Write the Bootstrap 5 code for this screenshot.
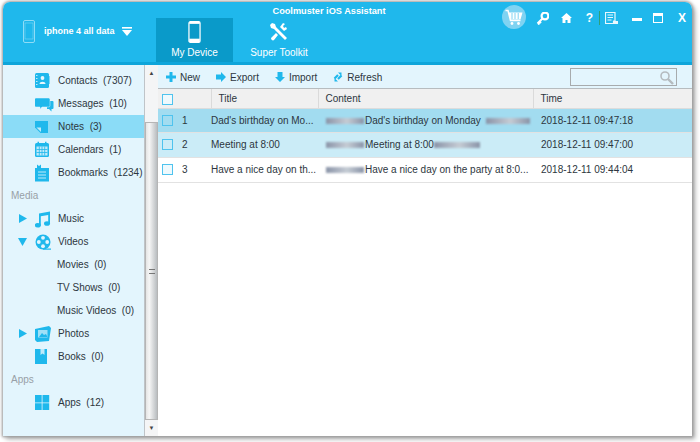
<!doctype html>
<html lang="en"><head><meta charset="utf-8"><title>Coolmuster iOS Assistant</title>
<link href="https://cdn.jsdelivr.net/npm/bootstrap@5.3.0/dist/css/bootstrap.min.css" rel="stylesheet">
<style>
html,body{height:100%;}
body{background:#fff;font-family:"Liberation Sans",Arial,sans-serif;font-size:10px;color:#2d3640;padding:2px 8px 6px 3px;overflow:hidden;}
.appwin{height:434px;border-radius:7px 7px 0 0;box-shadow:0 0 3px 1px #9a9a9a,3px 3px 5px #aaa;background:#fff;overflow:hidden;}
.apphead{height:63px;background:#1fb8ec;border-bottom:3px solid #0ea5da;color:#fff;position:relative;}
.devbox{width:153px;padding-left:20px;padding-bottom:1px;font-weight:700;font-size:9px;gap:9px;}
.devarrow{margin-left:-2px;}
.tabbox{width:77px;height:44px;margin-top:16px;font-size:10px;line-height:12px;text-align:center;padding-top:3px;}
.tabbox svg{display:block;margin:0 auto 4px;height:22px;}
.tabsel{background:#0a9ac9;}
.tabplain{width:92px;}
.apptitle{position:absolute;left:0;width:652px;top:3px;text-align:center;font-weight:700;font-size:9.2px;}
.wintools{position:absolute;top:3px;right:0;height:24px;}
.wt{position:absolute;top:0;}
.sidebox{width:141px;background:#e3f5fd;padding-top:4px;}
.siderow{height:23px;padding-left:32px;}
.nm{margin-left:4px;white-space:pre;}
.siderow.sel{background:#8bdcf7;}
.sidehead{height:23px;padding-left:8px;color:#98a0a6;}
.subrow{padding-left:54px;white-space:pre;}
.tri{position:absolute;left:-16px;top:4px;}
.tridown{left:-17px;top:5px;}
.ico{position:relative;width:19px;height:18px;flex-shrink:0;display:block;}
.sbar{width:14px;background:#f4f5f6;border-left:1px solid #bfc4c8;}
.sbarbtn{height:16px;color:#444;font-size:6px;line-height:16px;text-align:center;}
.sbargap{height:41px;}
.sbarthumb{flex:1;background:linear-gradient(90deg,#e4e4e4,#f6f6f6 30%,#b9bdc0);border:1px solid #b5b5b5;}
.gripper{width:6px;height:5px;border-top:1px solid #777;border-bottom:1px solid #777;position:relative;}
.mainbox{background:#fff;margin-left:0;min-width:0;}
.toolrow{height:24px;background:#e3f5fd;border-bottom:1px solid #b7bcbf;padding-left:8px;padding-top:1px;}
.tbtn{margin-right:16px;gap:4px;}
.searchbox{width:107px;height:18px;border:1px solid #a7abad;margin-left:auto;margin-right:15px;background:#e3f5fd;position:relative;}
.searchbox svg{position:absolute;right:1px;top:1px;}
.grid{table-layout:fixed;width:100%;margin:0;font-size:10px;border-collapse:collapse;}
.grid th,.grid td{padding:0;white-space:nowrap;overflow:hidden;vertical-align:middle;color:#2d3640;box-shadow:none;background:transparent;}
.grid thead th{height:19px;background:#f0f0f0;font-weight:400;border:0;border-bottom:1px solid #dcdcdc;padding-left:7px;border-left:1px solid #dadada;}
.grid thead th:first-child{border-left:0;padding-left:4px;}
.grid tbody td{height:25px;border-bottom:1px solid #e2e2e2;}
.grid tbody tr.rowa td{height:24px;}
.rowa{background:#a2dcf0;}.rowb{background:#cbecf7;}
.chkbox{display:inline-block;width:11px;height:11px;border:1px solid #4fc3ee;background:#eef9fd;vertical-align:middle;}
.rowa .chkbox{background:#a2dcf0;}.rowb .chkbox{background:#cbecf7;}
.numcell{display:inline-block;margin-left:9px;vertical-align:middle;}
.smudge{display:inline-block;height:6px;vertical-align:middle;background:linear-gradient(90deg,#8a94a8,#b5bcc8 40%,#c5ccd4 55%,#8a94a8);filter:blur(1px);}
.s1{width:38px;margin-right:1px;}.s2{width:44px;margin-left:5px;}.s3{width:46px;}
.pt1{padding-left:8px !important;}
</style></head>
<body>
<div class="appwin d-flex flex-column">
  <div class="apphead d-flex flex-shrink-0">
    <div class="devbox d-flex align-items-center">
      <svg width="12" height="23" viewBox="0 0 12 23"><rect x=".5" y=".5" width="11" height="22" rx="1.500" fill="none" stroke="#8fdcf6"/><rect x="2" y="3" width="8" height="16" fill="#1fb8ec" stroke="#7fd6f4" stroke-width=".6"/></svg>
      <span>iphone 4 all data</span>
      <svg class="devarrow" width="10" height="9" viewBox="0 0 10 9"><rect width="10" height="1.600" fill="#fff"/><path d="M0 3h10L5 9z" fill="#fff"/></svg>
    </div>
    <div class="tabbox tabsel">
      <svg width="13" height="22" viewBox="0 0 13 23"><rect x=".7" y=".7" width="11.600" height="21.600" rx="1.500" fill="none" stroke="#fff" stroke-width="1.300"/><rect x="1" y="18.500" width="11" height="3.500" fill="#fff"/><rect x="1" y="1" width="11" height="2" fill="#fff"/></svg>
      My Device
    </div>
    <div class="tabbox tabplain">
      <svg width="20" height="22" viewBox="0 0 20 20"><path d="M3 1l3 1 1 3 11 11-2 2L5 7 2 6 1 3zM13 7l-2-2 3-4 2 1-2 2 1 2 2-1 1 2-3 2zM7 11l2 2-4 5c-1 1-3 0-3-2z" fill="#fff"/></svg>
      Super Toolkit
    </div>
    <div class="apptitle">Coolmuster iOS Assistant</div>
    <div class="wintools">
      <svg class="wt" style="right:166px" width="24" height="24" viewBox="0 0 24 24"><circle cx="12" cy="12" r="12" fill="#7fd3f2"/><path d="M3.500 5.500h2.500l2.500 10h10" fill="none" stroke="#fff" stroke-width="1.500"/><path d="M6.500 7.500h14l-2 7h-10z" fill="#fff"/><path d="M10 8v6M13 8v6M16.200 8v6" stroke="#7fd3f2"/><circle cx="10" cy="18.500" r="1.400" fill="#fff"/><circle cx="16.500" cy="18.500" r="1.400" fill="#fff"/></svg>
      <svg class="wt" style="right:143px;top:7px" width="13" height="13" viewBox="0 0 13 13"><circle cx="9" cy="4" r="3.400" fill="none" stroke="#fff" stroke-width="2.200"/><path d="M6.500 6.500L1.500 11.500M2 11l1.500 1.500M3.500 9.500l1.500 1.500" stroke="#fff" stroke-width="2"/></svg>
      <svg class="wt" style="right:120px;top:8px" width="11" height="10" viewBox="0 0 11 10"><path d="M5.500 0L11 5H9.500v5H6.500V7h-2v3H1.500V5H0z" fill="#fff"/></svg>
      <span class="wt fw-bold" style="right:99px;top:6px;font-size:12px;line-height:15px">?</span>
      <span class="wt" style="right:92px;top:6px;width:1px;height:14px;background:#2f9f78"></span>
      <svg class="wt" style="right:74px;top:7px" width="13" height="13" viewBox="0 0 13 13"><path d="M.5.500h9.500v8.500H8.500v2.500H.5z" fill="#1fb8ec" stroke="#e9f8fe" stroke-width="1.200"/><path d="M2.500 3h5.500M2.500 5.500h5.500M2.500 8h4" stroke="#e9f8fe" stroke-width="1.200"/><rect x="9" y="9" width="4" height="3" fill="#e9f8fe"/></svg>
      <span class="wt" style="right:50px;top:13px;width:10px;height:3px;background:#fff"></span>
      <span class="wt" style="right:29px;top:8px;width:10px;height:10px;border:1.500px solid #fff;border-top-width:3px"></span>
      <span class="wt fw-bold" style="right:6px;top:6px;font-size:12px;line-height:14px">X</span>
    </div>
  </div>
  <div class="d-flex flex-grow-1" style="min-height:0">
    <div class="sidebox flex-shrink-0">
      <div class="siderow d-flex align-items-center">
        <svg class="ico" viewBox="0 0 19 18"><rect x="0" y="1" width="14" height="15" rx="1.500" fill="#1fb8ec"/><path d="M1 3.500h1.500M1 6.500h1.500M1 9.500h1.500M1 12.500h1.500" stroke="#bfeafa"/><rect x="14" y="4" width="1" height="8" fill="#7fd6f4"/><circle cx="7.500" cy="6" r="1.900" fill="#e8f8fe"/><path d="M4.500 12c0-3 6-3 6 0z" fill="#e8f8fe"/></svg>
        <span class="nm">Contacts  (7307)</span></div>
      <div class="siderow d-flex align-items-center">
        <svg class="ico" viewBox="1 0 19 18"><path d="M13 6h5.500a1 1 0 0 1 1 1v6a1 1 0 0 1-1 1h-1v2.500L15 14h-2z" fill="#1fb8ec"/><path d="M2 3h12.500a1.500 1.500 0 0 1 1.500 1.500v6a1.500 1.500 0 0 1-1.500 1.500H8l-2 2.200V12H2a1.500 1.500 0 0 1-1.500-1.500v-6A1.500 1.500 0 0 1 2 3z" fill="#1fb8ec" stroke="#e3f5fd" stroke-width=".5"/></svg>
        <span class="nm">Messages  (10)</span></div>
      <div class="siderow sel d-flex align-items-center">
        <svg class="ico" viewBox="0 0 19 18"><path d="M0 3h13v12H5.500L0 9.500z" fill="#1fb8ec"/><path d="M1.500 9.500h4.500v4.500z" fill="#bfeafa"/></svg>
        <span class="nm">Notes  (3)</span></div>
      <div class="siderow d-flex align-items-center">
        <svg class="ico" viewBox="0 0 19 18"><rect x="0" y="2" width="14" height="14" rx="1.500" fill="#1fb8ec"/><path d="M2.500 .8h1.500v3H2.500zM10 .8h1.500v3H10z" fill="#1fb8ec"/><path d="M1.500 5.500h11v9h-11z" fill="#bfeafa"/><path d="M4.300 5.500v9M7 5.500v9M9.700 5.500v9M1.500 8.500h11M1.500 11.500h11" stroke="#1fb8ec" stroke-width=".8"/></svg>
        <span class="nm">Calendars  (1)</span></div>
      <div class="siderow d-flex align-items-center">
        <svg class="ico" viewBox="0 0 19 18"><path d="M0 4h2V.5L4 2l2-1.500V4h8v13.500H0z" fill="#1fb8ec"/><path d="M3 8h8M3 11h8M3 14h8" stroke="#bfeafa"/></svg>
        <span class="nm">Bookmarks  (1234)</span></div>
      <div class="sidehead d-flex align-items-center">Media</div>
      <div class="siderow d-flex align-items-center">
        <span class="ico"><svg class="tri" width="8" height="9" viewBox="0 0 8 9"><path d="M0 0l8 4.500L0 9z" fill="#1fb8ec"/></svg><svg width="19" height="18" viewBox="1 0 19 18"><path d="M5 3.500L16 1.500v12h-1.800V5L6.800 6.300V15.500H5z" fill="#1fb8ec"/><ellipse cx="3.800" cy="15.300" rx="3" ry="2.300" fill="#1fb8ec"/><ellipse cx="13" cy="13.500" rx="3" ry="2.300" fill="#1fb8ec"/></svg></span><span class="nm">Music</span></div>
      <div class="siderow d-flex align-items-center">
        <span class="ico"><svg class="tri tridown" width="9" height="8" viewBox="0 0 9 8"><path d="M0 0h9L4.500 8z" fill="#1fb8ec"/></svg><svg width="19" height="18" viewBox="1 0 19 18"><circle cx="9" cy="9" r="7.500" fill="#1fb8ec"/><circle cx="9" cy="4.800" r="1.900" fill="#e3f5fd"/><circle cx="9" cy="13.200" r="1.900" fill="#e3f5fd"/><circle cx="4.800" cy="9" r="1.900" fill="#e3f5fd"/><circle cx="13.200" cy="9" r="1.900" fill="#e3f5fd"/><path d="M9 15.500h8v1.200H9z" fill="#1fb8ec"/></svg></span><span class="nm">Videos</span></div>
      <div class="siderow subrow d-flex align-items-center">Movies  (0)</div>
      <div class="siderow subrow d-flex align-items-center">TV Shows  (0)</div>
      <div class="siderow subrow d-flex align-items-center">Music Videos  (0)</div>
      <div class="siderow d-flex align-items-center">
        <span class="ico"><svg class="tri" width="8" height="9" viewBox="0 0 8 9"><path d="M0 0l8 4.500L0 9z" fill="#1fb8ec"/></svg><svg width="19" height="18" viewBox="1 0 19 18"><path d="M1 4l14-3 2 2-2 13-12 1-2-2z" fill="#1fb8ec"/><rect x="4" y="5" width="9.500" height="7.500" fill="#9fe0f7"/><path d="M5 12l3-4 2 2 2-1 1.500 3z" fill="#1fb8ec"/></svg></span><span class="nm">Photos</span></div>
      <div class="siderow d-flex align-items-center">
        <svg class="ico" viewBox="0 0 19 18"><path d="M0 1h12v15H0z" fill="#1fb8ec"/><path d="M5.500 1h4v6l-2-1.500-2 1.500z" fill="#bfeafa"/></svg>
        <span class="nm">Books  (0)</span></div>
      <div class="sidehead d-flex align-items-center">Apps</div>
      <div class="siderow d-flex align-items-center">
        <svg class="ico" viewBox="0 0 19 18"><path d="M0 1h6.700v7.500H0zM7.500 1h6.700v7.500H7.500zM0 9.300h6.700V16H0zM7.500 9.300h6.700V16H7.500z" fill="#1fb8ec"/></svg>
        <span class="nm">Apps  (12)</span></div>
    </div>
    <div class="sbar d-flex flex-column flex-shrink-0">
      <div class="sbarbtn">▲</div>
      <div class="sbargap"></div>
      <div class="sbarthumb d-flex align-items-center justify-content-center"><span class="gripper"></span></div>
      <div class="sbarbtn">▼</div>
    </div>
    <div class="mainbox flex-grow-1">
      <div class="toolrow d-flex align-items-center">
        <div class="tbtn d-flex align-items-center"><svg width="10" height="10" viewBox="0 0 10 10"><path d="M3.500 0h3v3.500H10v3H6.500V10h-3V6.500H0v-3h3.500z" fill="#1fb8ec"/></svg>New</div>
        <div class="tbtn d-flex align-items-center"><svg width="10" height="10" viewBox="0 0 10 10"><path d="M0 2.500h5V0l5 5-5 5V7.500H0z" fill="#1fb8ec"/></svg>Export</div>
        <div class="tbtn d-flex align-items-center"><svg width="10" height="10" viewBox="0 0 10 10"><path d="M2.500 0h5v5H10l-5 5-5-5h2.500z" fill="#1fb8ec"/></svg>Import</div>
        <div class="tbtn d-flex align-items-center"><svg width="10" height="10" viewBox="0 0 10 10"><path d="M1.500 6.500L5 3M8.500 3.500L5 7" fill="none" stroke="#1fb8ec" stroke-width="2.200"/><path d="M5 .5h3.500V4zM5 9.500H1.500V6z" fill="#1fb8ec"/></svg>Refresh</div>
        <div class="searchbox"><svg width="16" height="15" viewBox="0 0 16 15"><circle cx="6" cy="6" r="4" fill="none" stroke="#b5bbbf" stroke-width="1.600"/><path d="M9 9l5 5" stroke="#b5bbbf" stroke-width="2.400"/></svg></div>
      </div>
      <table class="table grid">
        <colgroup><col style="width:53px"><col style="width:107px"><col style="width:215px"><col></colgroup>
        <thead><tr><th><span class="chkbox"></span></th><th>Title</th><th>Content</th><th>Time</th></tr></thead>
        <tbody>
          <tr class="rowa"><td class="ps-1"><span class="chkbox"></span><span class="numcell">1</span></td><td>Dad's birthday on Mo...</td><td class="pt1"><span class="smudge s1"></span>Dad's birthday on Monday<span class="smudge s2"></span></td><td class="pt1">2018-12-11 09:47:18</td></tr>
          <tr class="rowb"><td class="ps-1"><span class="chkbox"></span><span class="numcell">2</span></td><td>Meeting at 8:00</td><td class="pt1"><span class="smudge s1"></span>Meeting at 8:00<span class="smudge s3"></span></td><td class="pt1">2018-12-11 09:47:00</td></tr>
          <tr><td class="ps-1"><span class="chkbox"></span><span class="numcell">3</span></td><td>Have a nice day on th...</td><td class="pt1"><span class="smudge s1"></span>Have a nice day on the party at 8:0...</td><td class="pt1">2018-12-11 09:44:04</td></tr>
        </tbody>
      </table>
    </div>
  </div>
</div>
<script src="https://cdn.jsdelivr.net/npm/bootstrap@5.3.0/dist/js/bootstrap.bundle.min.js"></script>
</body></html>
